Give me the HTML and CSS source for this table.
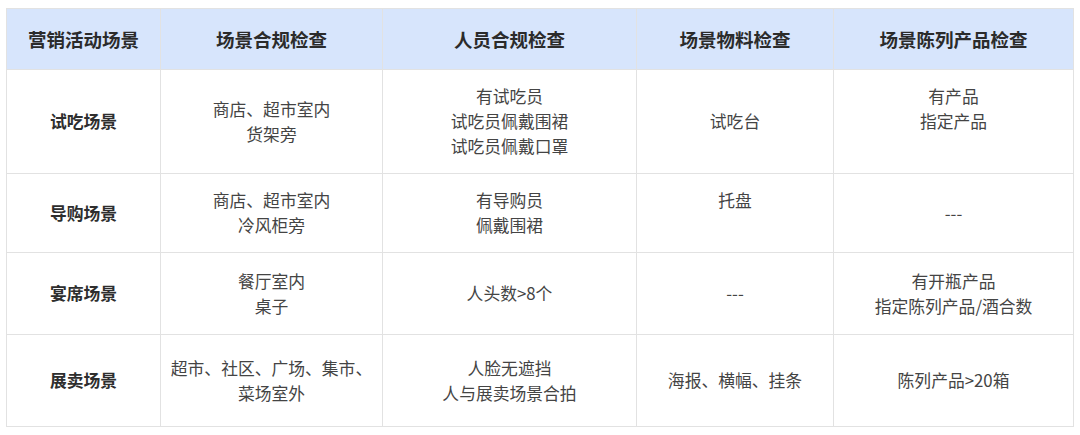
FILE: index.html
```html
<!DOCTYPE html>
<html lang="zh">
<head>
<meta charset="utf-8">
<link rel="stylesheet" href="styles.css">
</head>
<body>
<table class="grid">
  <colgroup>
    <col class="c1"><col class="c2"><col class="c3"><col class="c4"><col class="c5">
  </colgroup>
  <thead>
    <tr class="head">
      <th>营销活动场景</th>
      <th>场景合规检查</th>
      <th>人员合规检查</th>
      <th>场景物料检查</th>
      <th>场景陈列产品检查</th>
    </tr>
  </thead>
  <tbody>
    <tr class="r1">
      <td class="name">试吃场景</td>
      <td>商店、超市室内<br>货架旁</td>
      <td>有试吃员<br>试吃员佩戴围裙<br>试吃员佩戴口罩</td>
      <td>试吃台</td>
      <td>有产品<br>指定产品<br>&nbsp;</td>
    </tr>
    <tr class="r2">
      <td class="name">导购场景</td>
      <td>商店、超市室内<br>冷风柜旁</td>
      <td>有导购员<br>佩戴围裙</td>
      <td>托盘<br>&nbsp;</td>
      <td>---</td>
    </tr>
    <tr class="r3">
      <td class="name">宴席场景</td>
      <td>餐厅室内<br>桌子</td>
      <td>人头数&gt;8个</td>
      <td>---</td>
      <td>有开瓶产品<br>指定陈列产品/酒合数</td>
    </tr>
    <tr class="r4">
      <td class="name">展卖场景</td>
      <td>超市、社区、广场、集市、<br>菜场室外</td>
      <td>人脸无遮挡<br>人与展卖场景合拍</td>
      <td>海报、横幅、挂条</td>
      <td>陈列产品&gt;20箱</td>
    </tr>
  </tbody>
</table>
</body>
</html>
```
FILE: styles.css
```css
html, body {
  margin: 0;
  padding: 0;
  background: #ffffff;
}
body {
  padding: 8px 0 0 6px;
  font-family: "Noto Sans CJK SC", "Noto Sans", sans-serif;
}
.grid {
  border-collapse: collapse;
  table-layout: fixed;
  width: 1067px;
}
.c1 { width: 154px; }
.c2 { width: 222px; }
.c3 { width: 254px; }
.c4 { width: 197px; }
.c5 { width: 240px; }
.grid th, .grid td {
  border: 1px solid #e2e2e2;
  text-align: center;
  vertical-align: middle;
  padding: 0 4px;
}
.grid th {
  background: #d7e5fc;
  color: #2b2b2b;
  font-size: 18.5px;
  font-weight: 700;
  height: 60px;
}
.grid td {
  color: #444444;
  font-size: 16.8px;
  line-height: 25px;
}
.grid td.name {
  font-weight: 700;
  color: #2e2e2e;
}
.r1 td { height: 103px; }
.r2 td { height: 78px; }
.r3 td { height: 81px; }
.r4 td { height: 91px; }
```
